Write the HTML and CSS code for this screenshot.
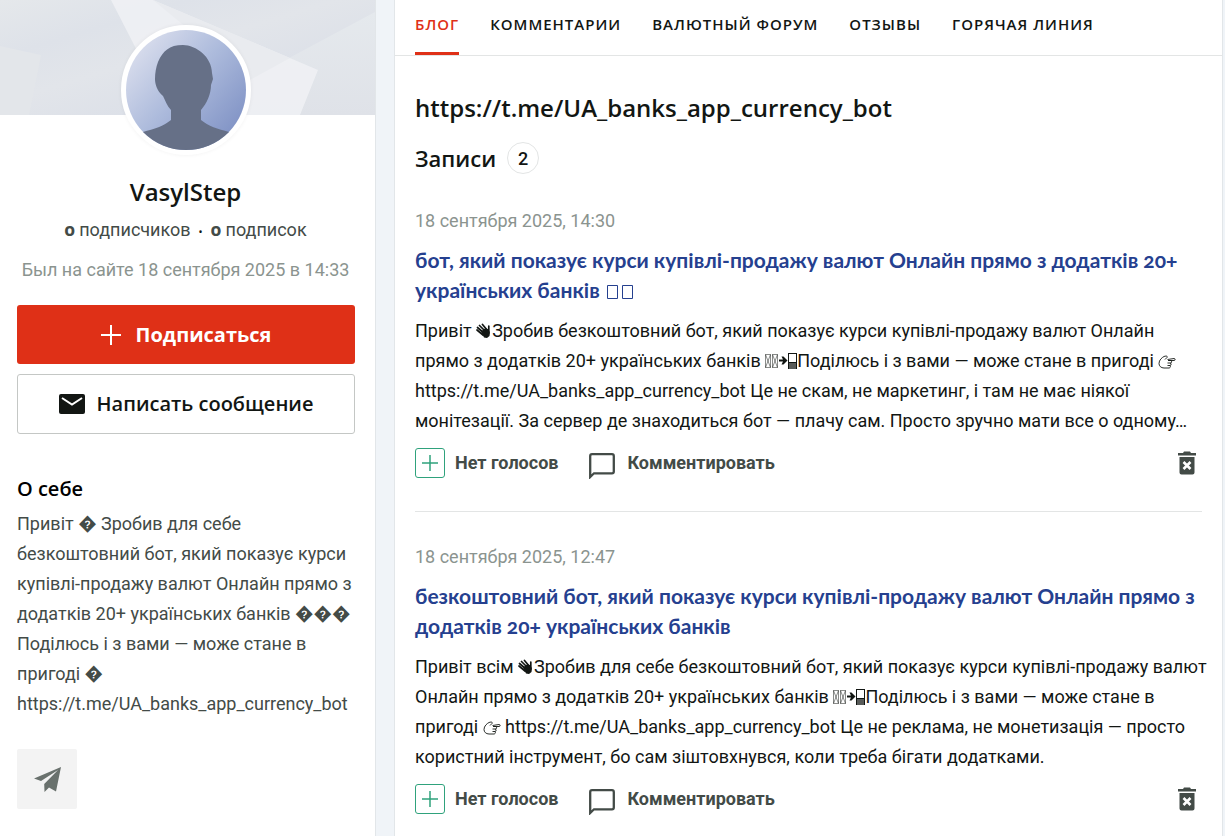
FILE: index.html
```html
<!DOCTYPE html>
<html lang="ru">
<head>
<meta charset="utf-8">
<meta name="viewport" content="width=device-width, initial-scale=1">
<title>VasylStep</title>
<link rel="stylesheet" href="styles.css">
</head>
<body>
<svg class="sprite" aria-hidden="true">
  <symbol id="wave" viewBox="0 0 16 16"><path d="M1 7l6 5M1.500 4.500l7 6M3.500 2.500l6 6M6.500 1.500l5 6M12.800 3v6" fill="none" stroke="currentColor" stroke-width="1.700" stroke-linecap="round"/><path d="M5 8.500L9.500 5l3 1.500 1.500 3-.5 3.500-2.500 2-3-.5z" fill="currentColor"/></symbol>
  <symbol id="phone" viewBox="0 0 18 18"><path d="M0 7.500h4L2.500 4.500h2L8.500 8.500l-4 4h-2L4 9.500H0z" fill="currentColor"/><path d="M9 1h9v16H9z" fill="currentColor"/><path d="M10 2h7v8h-7z" fill="#fff"/><path d="M10 12h7M10 14h7M10 16h7" stroke="#fff" stroke-width=".6"/></symbol>
  <symbol id="tofu" viewBox="0 0 7 14"><path d="M.5.5h5v13h-5zM.5.5l5 13M5.500.5l-5 13" fill="none" stroke="currentColor" stroke-width=".5"/></symbol>
  <symbol id="box" viewBox="0 0 11 14"><path d="M.5.5h10v13H.5z" fill="none" stroke="currentColor"/></symbol>
  <symbol id="point" viewBox="0 0 18 15"><path d="M9.500 4.500L16 3.500c1.500 0 1.500 2 0 2h-5.500M10 5.500h2.500c1.500 0 1.500 2.500 0 2.500H9.500M12 8c1.500 0 1.500 2.500 0 2.500H9.500M11.500 10.500c1.500 0 1 2.500-.5 2.500H6c-3 0-5-2-5-4.500C1 5 4 2.500 6 1.500c2-.8 4-.5 3 1L7 4.500" fill="none" stroke="currentColor" stroke-width=".9"/></symbol>
  <symbol id="comment" viewBox="0 0 26 26"><path d="M1.200 24V3Q1.200 1.200 3 1.200h20q1.800 0 1.800 1.800v15.500q0 1.800-1.800 1.800H5z" fill="none" stroke="currentColor" stroke-width="2.300"/></symbol>
  <symbol id="trash" viewBox="0 0 18 24"><path d="M0 2h5l1-1.500h6L13 2h5v2.500H0zM1.500 6h15v15.500q0 2-2 2h-11q-2 0-2-2z" fill="currentColor"/><path d="M5.500 11l7 7M12.500 11l-7 7" stroke="#fff" stroke-width="2.600"/></symbol>
  <symbol id="plus" viewBox="0 0 20 20"><path d="M10 0v20M0 10h20" stroke="currentColor" stroke-width="2"/></symbol>
</svg>
<div class="layout">
  <aside class="sidebar">
    <svg class="cover" viewBox="0 0 375 115" preserveAspectRatio="none" aria-hidden="true">
      <defs><linearGradient id="cg" x1="0" y1="0" x2="1" y2="1"><stop offset="0" stop-color="#e5e8eb"/><stop offset=".25" stop-color="#dee2e9"/><stop offset=".45" stop-color="#e2e5ea"/><stop offset=".7" stop-color="#dce0e8"/><stop offset="1" stop-color="#e1e4e9"/></linearGradient>
      <linearGradient id="cr" x1="0" y1="0" x2="0" y2="1"><stop offset="0" stop-color="#e5e9ed"/><stop offset="1" stop-color="#dfe2e8"/></linearGradient></defs>
      <path d="M0 0h375v115H0z" fill="url(#cg)"/>
      <path d="M0 46l41 9-12 60H0z" fill="#e3e6ea"/>
      <path d="M375 12L220 95v20h155z" fill="url(#cr)"/>
      <path d="M111 0h42l165 70-18 45H170z" fill="#f0f1f4" fill-opacity=".85"/>
      <path d="M153 0l137 58-40 22z" fill="#e9ebef"/>
    </svg>
    <svg class="avatar" viewBox="0 0 120 120" role="img" aria-label="VasylStep">
      <defs><linearGradient id="ag" x1=".1" y1=".1" x2=".9" y2=".8"><stop offset="0" stop-color="#dadeed"/><stop offset=".5" stop-color="#adbbdc"/><stop offset="1" stop-color="#8496c7"/></linearGradient></defs>
      <path d="M0 0h120v120H0z" fill="url(#ag)"/>
      <path d="M57 15c13 0 29 12 29 28l1 6-2 6c0 9-4 18-10 25v10c7 6 17 9 28 12l4 18H12l5-18c11-3 21-6 28-12V80c-4-4-6-10-8-14-6-5-8-12-8-17 0-6 1-12 3-17 5-11 11-17 25-17z" fill="#667087"/>
    </svg>
    <h1 class="name">VasylStep</h1>
    <p class="counts"><a href="#"><b>0</b> подписчиков</a><span class="dot">•</span><a href="#"><b>0</b> подписок</a></p>
    <p class="seen">Был на сайте 18 сентября 2025 в 14:33</p>
    <div class="side-body">
      <button class="btn btn-primary" type="button"><svg class="i20" aria-hidden="true"><use href="#plus"/></svg>Подписаться</button>
      <button class="btn btn-outline" type="button"><svg class="mail" viewBox="0 0 26 20" aria-hidden="true"><rect width="26" height="20" rx="2" fill="currentColor"/><path d="M3 4l10 6.500L23 4" fill="none" stroke="#fff" stroke-width="2"/></svg>Написать сообщение</button>
      <h2 class="about-title">О себе</h2>
      <p class="about">Привіт � Зробив для себе безкоштовний бот, який показує курси купівлі-продажу валют Онлайн прямо з додатків 20+ українських банків ��� Поділюсь і з вами — може стане в пригоді � https://t.me/UA_banks_app_currency_bot</p>
      <a class="telegram" href="#" aria-label="Telegram"><svg viewBox="0 0 27 25" aria-hidden="true"><path d="M27 0l-5 24.500-7-4-4.500 4.500-.3-8L24 3 7 14 0 11.500z" fill="currentColor"/></svg></a>
    </div>
  </aside>
  <main class="main">
    <nav class="tabs">
      <a class="tab active" href="#">БЛОГ</a>
      <a class="tab" href="#">КОММЕНТАРИИ</a>
      <a class="tab" href="#">ВАЛЮТНЫЙ ФОРУМ</a>
      <a class="tab" href="#">ОТЗЫВЫ</a>
      <a class="tab" href="#">ГОРЯЧАЯ ЛИНИЯ</a>
    </nav>
    <div class="content">
      <h2 class="heading">https://t.me/UA_banks_app_currency_bot</h2>
      <h3 class="records">Записи <span class="count">2</span></h3>
      <article class="post">
        <time class="date" datetime="2025-09-18T14:30">18 сентября 2025, 14:30</time>
        <h4 class="title"><a href="#">бот, який показує курси купівлі-продажу валют Онлайн прямо з додатків 20+ українських банків <svg class="box"><use href="#box"/></svg><svg class="box"><use href="#box"/></svg></a></h4>
        <p class="text">Привіт <svg class="wave"><use href="#wave"/></svg>Зробив безкоштовний бот, який показує курси купівлі-продажу валют Онлайн прямо з додатків 20+ українських банків <svg class="tofu"><use href="#tofu"/></svg><svg class="tofu"><use href="#tofu"/></svg><svg class="phone"><use href="#phone"/></svg>Поділюсь і з вами — може стане в пригоді <svg class="point"><use href="#point"/></svg> https://t.me/UA_banks_app_currency_bot Це не скам, не маркетинг, і там не має ніякої монітезації. За сервер де знаходиться бот — плачу сам. Просто зручно мати все о одному…</p>
        <div class="actions">
          <button class="vote" type="button" aria-label="Проголосовать"><svg viewBox="0 0 16 16"><path d="M8 0v16M0 8h16" stroke="currentColor" stroke-width="1.500"/></svg></button>
          <span class="votes">Нет голосов</span>
          <a class="reply" href="#"><svg aria-hidden="true"><use href="#comment"/></svg>Комментировать</a>
          <button class="trash" type="button" aria-label="Удалить"><svg><use href="#trash"/></svg></button>
        </div>
      </article>
      <article class="post">
        <time class="date" datetime="2025-09-18T12:47">18 сентября 2025, 12:47</time>
        <h4 class="title"><a href="#">безкоштовний бот, який показує курси купівлі-продажу валют Онлайн прямо з додатків 20+ українських банків</a></h4>
        <p class="text">Привіт всім <svg class="wave"><use href="#wave"/></svg>Зробив для себе безкоштовний бот, який показує курси купівлі-продажу валют Онлайн прямо з додатків 20+ українських банків <svg class="tofu"><use href="#tofu"/></svg><svg class="tofu"><use href="#tofu"/></svg><svg class="phone"><use href="#phone"/></svg>Поділюсь і з вами — може стане в пригоді <svg class="point"><use href="#point"/></svg> https://t.me/UA_banks_app_currency_bot Це не реклама, не монетизація — просто користний інструмент, бо сам зіштовхнувся, коли треба бігати додатками.</p>
        <div class="actions">
          <button class="vote" type="button" aria-label="Проголосовать"><svg viewBox="0 0 16 16"><path d="M8 0v16M0 8h16" stroke="currentColor" stroke-width="1.500"/></svg></button>
          <span class="votes">Нет голосов</span>
          <a class="reply" href="#"><svg aria-hidden="true"><use href="#comment"/></svg>Комментировать</a>
          <button class="trash" type="button" aria-label="Удалить"><svg><use href="#trash"/></svg></button>
        </div>
      </article>
    </div>
  </main>
</div>
</body>
</html>
```
FILE: styles.css
```css
* { box-sizing: border-box; }
body { margin: 0; background: #f0f4f8; color: #121613; font: 400 18px/30px Roboto, sans-serif; }
h1, h2, h3, h4, p { margin: 0; }
a { color: inherit; text-decoration: none; }
button { font: inherit; cursor: pointer; padding: 0; }
.sprite { display: none; }
.layout { display: grid; grid-template-columns: 376px 1fr; gap: 18px; padding-right: 2px; min-height: 100vh; }
.sidebar { display: flex; flex-direction: column; align-items: center; background: #fff; border-right: 1px solid #e2e6e9; padding-bottom: 20px; }
.cover { display: block; width: 100%; height: 115px; }
.avatar { width: 130px; height: 130px; margin: -90px 4px 0 0; border: 5px solid #fff; border-radius: 50%; background: #fff; position: relative; box-shadow: 0 0 4px rgba(0, 0, 0, .06); }
.name, .heading, .records, .btn, .about-title, .tab, .counts b { font-family: "Open Sans", sans-serif; font-variant-numeric: oldstyle-nums; }
.name { margin-top: 22px; padding-right: 4px; font-size: 24px; font-weight: 600; }
.counts { height: 30px; margin-top: 8px; padding-right: 4px; color: #434b47; }
.counts b { font-weight: 700; line-height: 20px; }
.dot { margin: 0 8px; font-size: 12px; line-height: 20px; color: #121613; }
.seen { margin-top: 10px; padding-right: 4px; color: #8b948f; }
.side-body { align-self: stretch; display: flex; flex-direction: column; padding: 20px 20px 0 17px; }
.btn { display: flex; align-items: center; justify-content: center; gap: 15px; height: 59px; border-radius: 3px; font-size: 20px; font-weight: 700; }
.btn-primary { border: 0; background: #df3017; color: #fff; }
.btn-outline { height: 60px; margin-top: 10px; gap: 12px; border: 1px solid #c4c7c5; background: #fff; color: #121613; font-weight: 600; }
.i20 { width: 20px; height: 20px; }
.mail { width: 26px; height: 20px; }
.about-title { margin-top: 40px; font-size: 20px; font-weight: 600; color: #000; }
.about { margin-top: 5px; color: #434b47; }
.telegram { display: flex; align-items: center; justify-content: center; width: 60px; height: 60px; margin-top: 30px; border-radius: 2px; background: #f3f3f3; color: #69716d; }
.telegram svg { width: 27px; height: 25px; }
.main { min-width: 0; background: #fff; border: solid #e2e6e9; border-width: 0 1px; }
.tabs { display: flex; gap: 31px; padding: 0 20px; border-bottom: 1px solid #e3e5e5; }
.tab { padding: 9px 0 13px; border-bottom: 3px solid transparent; font-size: 15px; font-weight: 600; letter-spacing: 1px; white-space: nowrap; }
.active { color: #df3017; border-color: #df3017; }
.content { padding: 37px 20px 20px; }
.heading { font-size: 24px; font-weight: 600; }
.records { display: flex; align-items: center; gap: 11px; margin: 19px 0 32px; font-size: 22px; font-weight: 600; }
.count { display: grid; place-items: center; width: 32px; height: 32px; border: 1px solid #e3e5e5; border-radius: 50%; font: 500 18px Roboto, sans-serif; }
.post + .post { margin-top: 33px; padding-top: 30px; border-top: 1px solid #e3e5e5; }
.date { display: block; color: #8b948f; }
.title { margin: 9px 0 11px; font-family: Lato, sans-serif; font-variant-numeric: oldstyle-nums; font-size: 21px; font-weight: 700; color: #25408f; }
.text { margin-right: -6px; }
.box { width: 11px; height: 14px; margin: 0 2px; vertical-align: -1px; }
.wave { width: 16px; height: 16px; vertical-align: -2px; }
.tofu { width: 7px; height: 14px; vertical-align: -1px; }
.phone { width: 18px; height: 18px; vertical-align: -3px; }
.point { width: 18px; height: 15px; vertical-align: -3px; }
.actions { display: flex; align-items: center; margin-top: 12px; color: #434b47; font-weight: 700; }
.vote { display: grid; place-items: center; width: 30px; height: 30px; border: 1px solid #2fa27c; border-radius: 3px; background: #fff; color: #2fa27c; }
.vote svg { width: 16px; height: 16px; }
.votes { margin: 0 31px 0 10px; }
.reply { display: flex; gap: 12px; }
.reply svg { width: 26px; height: 26px; margin-top: 5px; margin-bottom: -1px; }
.trash { display: flex; margin: 0 6px 0 auto; border: 0; background: none; color: #434b47; }
.trash svg { width: 18px; height: 24px; }
```
